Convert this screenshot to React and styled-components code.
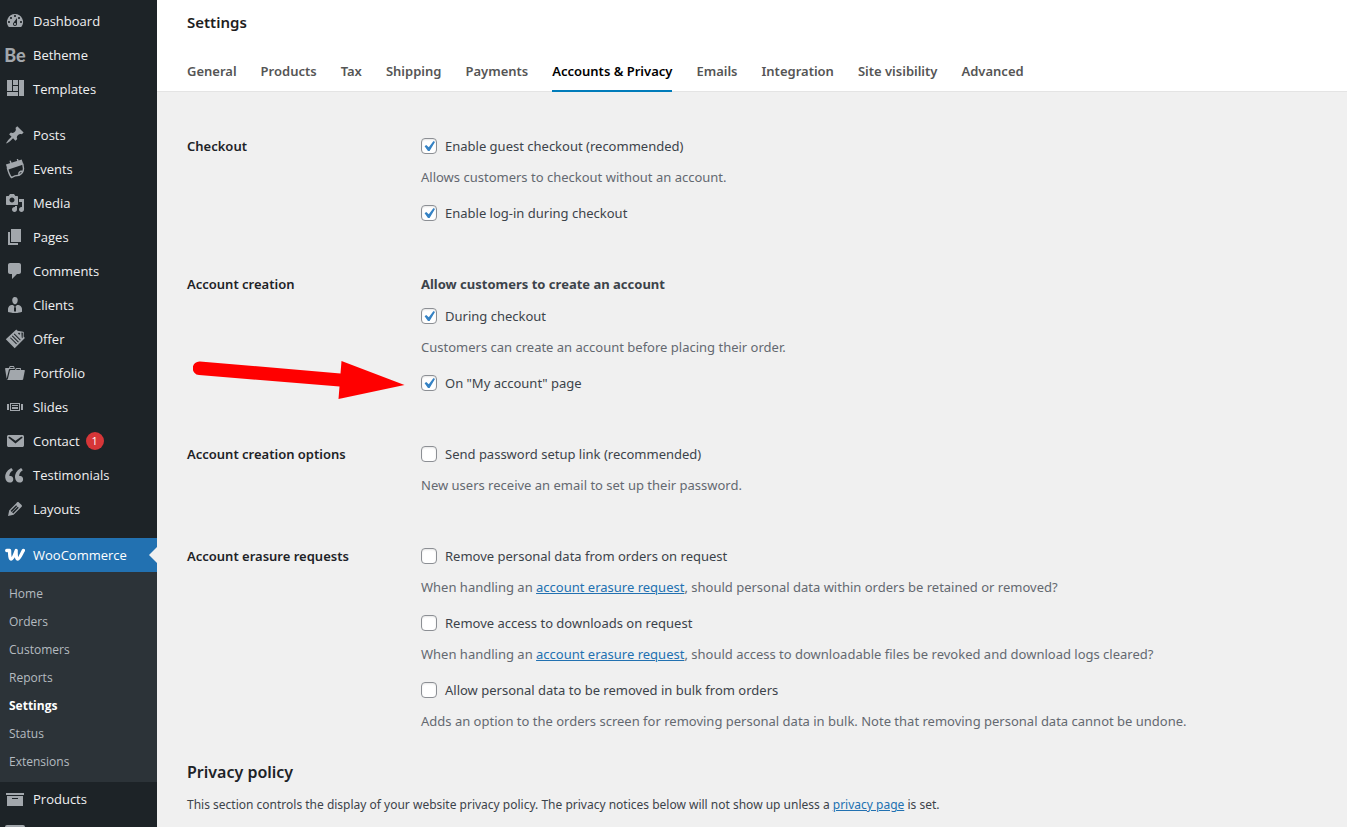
import React from 'react';
import styled, { createGlobalStyle, css } from 'styled-components';

const GlobalStyle = createGlobalStyle`
  *, *::before, *::after { box-sizing: border-box; }
  body {
    margin: 0;
    background: #f0f0f0;
    color: #3c434a;
    font-family: "Noto Sans", "Open Sans", sans-serif;
    font-size: 13px;
    line-height: 20px;
  }
`;

const Shell = styled.div`
  display: flex;
  height: 100vh;
  overflow: hidden;
`;

const Sidebar = styled.nav`
  flex: none;
  width: 157px;
  padding-top: 4px;
  overflow: hidden;
  background: #1d2327;
  font-family: "Open Sans", "Noto Sans", sans-serif;
`;

const MenuGroup = styled.ul`
  list-style: none;
  margin: 0 0 12px;
  padding: 0;
`;

const MenuLink = styled.a`
  position: relative;
  display: flex;
  align-items: center;
  gap: 8px;
  height: 34px;
  padding-left: 5px;
  color: ${(p) => (p.$active ? '#fff' : '#f0f0f1')};
  font-size: 13px;
  white-space: nowrap;
  text-decoration: none;
  ${(p) =>
    p.$active &&
    css`
      background: #2271b1;
      &::after {
        content: '';
        position: absolute;
        right: 0;
        top: 9px;
        border: 8px solid transparent;
        border-left: 0;
        border-right-color: #f0f0f0;
      }
    `}
`;

const Icon = styled.svg`
  flex: none;
  width: 20px;
  height: 20px;
  color: ${(p) => (p.$active ? '#fff' : '#a2a7ac')};
  fill: currentColor;
`;

const BrandMark = styled.span`
  display: flex;
  flex: none;
  justify-content: center;
  width: 20px;
  color: #a2a7ac;
  font-family: Lato, sans-serif;
  font-size: 18px;
  font-weight: 900;
  line-height: 18px;
`;

const Badge = styled.span`
  width: 18px;
  height: 18px;
  margin-left: -2px;
  border-radius: 9px;
  background: #d63638;
  color: #fff;
  font-size: 11px;
  line-height: 18px;
  text-align: center;
`;

const SubMenu = styled.ul`
  list-style: none;
  margin: 0;
  padding: 8px 0 6px;
  background: #2c3338;
`;

const SubLink = styled.a`
  display: block;
  padding: 4px 9px;
  color: ${(p) => (p.$current ? '#fff' : '#b5bbc0')};
  font-size: 12px;
  font-weight: ${(p) => (p.$current ? 700 : 400)};
  text-decoration: none;
`;

const Main = styled.main`
  flex: 1;
  min-width: 0;
`;

const Header = styled.header`
  padding: 10px 30px 0;
  background: #fff;
  border-bottom: 1px solid #e4e4e4;
`;

const PageTitle = styled.h1`
  margin: 0;
  color: #1e1e1e;
  font-size: 15px;
  font-weight: 600;
  line-height: 24px;
`;

const Tabs = styled.nav`
  display: flex;
  gap: 24px;
  margin-top: 16px;
`;

const Tab = styled.a`
  height: 42px;
  margin-bottom: -1px;
  padding-top: 11px;
  border-bottom: 2px solid ${(p) => (p.$current ? '#007cba' : 'transparent')};
  color: ${(p) => (p.$current ? '#000' : '#555')};
  font-weight: 600;
  white-space: nowrap;
  text-decoration: none;
`;

const Form = styled.form`
  position: relative;
  padding: 44px 30px 0;
`;

const Section = styled.section`
  display: grid;
  grid-template-columns: 234px 1fr;
  margin-bottom: ${(p) => (p.$last ? 29 : 51)}px;
`;

const SectionTitle = styled.h2`
  margin: 0;
  color: #1d2327;
  font-size: 13px;
  font-weight: 600;
  line-height: 20px;
`;

const Options = styled.div`
  display: flex;
  flex-direction: column;
  gap: 16px;
`;

const Lead = styled.strong`
  display: block;
  margin-bottom: -4px;
  font-weight: 700;
`;

const OptionLabel = styled.label`
  display: flex;
  align-items: center;
  gap: 8px;
`;

const Checkbox = styled.input`
  appearance: none;
  flex: none;
  width: 16px;
  height: 16px;
  margin: 0;
  border: 1px solid #8c8f94;
  border-radius: 4px;
  background: #fff;
  box-shadow: inset 0 1px 2px rgba(0, 0, 0, 0.1);
  &:checked::before {
    content: '';
    display: block;
    width: 14px;
    height: 14px;
    background: #3582c4;
    clip-path: path('M11.5 2L13 3L7.6 12H6L2.6 7.3L4.2 5.900L6.800 8.300Z');
  }
`;

const Description = styled.p`
  margin: 11px 0 0;
  color: #646970;
`;

const Link = styled.a`
  color: #2271b1;
`;

const PolicyTitle = styled.h2`
  margin: 0 0 11px;
  color: #1d2327;
  font-size: 16px;
  font-weight: 600;
  line-height: 24px;
`;

const PolicyText = styled.p`
  margin: 0;
  font-size: 12px;
`;

const Arrow = styled.svg`
  position: absolute;
  left: 36px;
  top: 268px;
  width: 212px;
  height: 40px;
  fill: #f00;
`;

const icons = {
  Dashboard: <path d="M3.76 16h12.48A7.998 7.998 0 0 0 10 3a7.998 7.998 0 0 0-6.24 13zM10 4c.55 0 1 .45 1 1s-.45 1-1 1-1-.45-1-1 .45-1 1-1zM6 6c.55 0 1 .45 1 1s-.45 1-1 1-1-.45-1-1 .45-1 1-1zm8 0c.55 0 1 .45 1 1s-.45 1-1 1-1-.45-1-1 .45-1 1-1zm-5.37 5.55L12 7v6c0 1.1-.9 2-2 2s-2-.9-2-2c0-.57.24-1.08.63-1.45zM4 10c.55 0 1 .45 1 1s-.45 1-1 1-1-.45-1-1 .45-1 1-1zm12 0c.55 0 1 .45 1 1s-.45 1-1 1-1-.45-1-1 .45-1 1-1zm-5 3c0-.55-.45-1-1-1s-1 .45-1 1 .45 1 1 1 1-.45 1-1z" />,
  Templates: <path d="M2 1h5v11H2V1zm6 0h5v5H8V1zm6 0h5v16h-5V1zM8 7h5v5H8V7zm-6 6h11v4H2v-4z" />,
  Posts: <path d="M10.44 3.02l1.82-1.82 6.36 6.35-1.83 1.82c-1.05-.68-2.48-.57-3.41.36l-.75.75c-.92.93-1.04 2.35-.35 3.41l-1.83 1.82-2.41-2.41-2.8 2.79c-.42.42-3.38 2.71-3.8 2.29s1.86-3.39 2.28-3.81l2.79-2.79L4.1 9.36l1.83-1.82c1.05.69 2.48.57 3.4-.36l.75-.75c.93-.92 1.05-2.35.36-3.41z" />,
  Events: (
    <>
      <path d="M.9 5.400L16.700.6L18.400 5.600L2.700 10.700Z" />
      <path
        d="M5.300 2.200L6.300 5M12.500.5L13.400 3M2.400 9C3.400 13 4.600 16.300 6.400 18.600C8.800 17 11 16.400 14 16.300C17.200 14.700 18.500 12.500 18.500 9.500L17.800 5M14 16.300C13.300 13.500 14.800 12 18 12"
        fill="none"
        stroke="currentColor"
        strokeWidth="1.400"
        strokeLinecap="round"
        strokeLinejoin="round"
      />
    </>
  ),
  Media: <path d="M13 11V4c0-.55-.45-1-1-1h-1.67L9 1H5L3.67 3H2c-.55 0-1 .45-1 1v7c0 .55.45 1 1 1h10c.55 0 1-.45 1-1zM7 4.5c1.38 0 2.5 1.12 2.5 2.5S8.38 9.5 7 9.5 4.5 8.38 4.5 7 5.62 4.5 7 4.5zM14 6h5v10.500c0 1.380-1.120 2.500-2.500 2.500S14 17.880 14 16.500s1.120-2.500 2.500-2.500c.17 0 .34.02.5.05V9h-3V6zm-4 8.050V13h2v3.500c0 1.380-1.120 2.500-2.500 2.500S7 17.880 7 16.500 8.120 14 9.500 14c.17 0 .34.02.5.05z" />,
  Pages: <path d="M6 15V2h10v13H6zm-1 1h8v2H3V5h2v11z" />,
  Comments: <path d="M5 2h9c1.1 0 2 .9 2 2v7c0 1.1-.9 2-2 2h-2l-5 5v-5H5c-1.1 0-2-.9-2-2V4c0-1.1.9-2 2-2z" />,
  Clients: <path d="M7.3 6l-.03-.19c-.04-.37-.05-.73-.03-1.08.02-.36.1-.71.25-1.04.14-.32.31-.61.52-.86s.49-.46.83-.6c.34-.15.72-.23 1.13-.23.69 0 1.26.2 1.71.59s.76.87.91 1.44.18 1.16.09 1.78l-.03.19c-.01.09-.05.25-.11.48-.05.24-.12.47-.2.69-.08.21-.19.45-.34.72-.14.27-.3.49-.47.69-.18.19-.4.34-.67.48-.27.13-.55.19-.86.19s-.59-.06-.87-.19c-.26-.13-.49-.29-.67-.5-.18-.2-.34-.42-.49-.66-.15-.25-.26-.49-.34-.73-.09-.25-.16-.47-.21-.67-.06-.21-.1-.37-.12-.5zm9.2 6.24c.41.7.5 1.41.5 2.14v2.49c0 .03-.12.08-.29.13-.18.04-.42.13-.97.27-.55.12-1.1.24-1.65.34s-1.19.19-1.95.27c-.75.08-1.46.12-2.13.12-.68 0-1.39-.04-2.14-.12-.75-.07-1.4-.17-1.98-.27-.58-.11-1.08-.23-1.56-.34-.49-.11-.8-.21-1.06-.29L3 16.870v-2.490c0-.75.07-1.460.46-2.150s.81-1.250 1.500-1.680C5.660 10.120 7.190 10 8 10l1.670 1.670L9 13v3l1.020 1.080L11 16v-3l-.68-1.330L11.970 10c.77 0 2.200.07 2.900.52.71.45 1.210 1.020 1.630 1.720z" />,
  Offer: (
    <path
      fillRule="evenodd"
      d="M11.300.6l1.200 1.100 5.600 1c.5.1.7.4.7.800l-.2 4.100 1.300 1.300-10.200 10.300L.8 10.300zM14 3.500l-1 1 1.300 1.300 1-1zM9.500 4.600l-.7.7 6.200 6.200.7-.7zM7.600 6.500l-.7.700 6.200 6.200.7-.7zM5.700 8.400l-.7.700 6.200 6.200.7-.7zM16.400 3.400l.3 5.100.9.8.3-5.600z"
    />
  ),
  Portfolio: <path d="M4 5H.78c-.37 0-.74.32-.69.84l1.560 9.990S3.500 8.470 3.860 6.700c.11-.53.61-.7.98-.7H10s-.7-2.080-.77-2.310C9.110 3.250 8.890 3 8.450 3H5.140c-.36 0-.7.23-.8.64C4.250 4.040 4 5 4 5zm4.880 0h-4s.42-1 .87-1h2.130c.48 0 1 1 1 1zM2.670 16.250c-.31.47-.76.75-1.260.75h15.730c.54 0 .92-.31 1.030-.83.44-2.190 1.680-8.440 1.680-8.440.07-.5-.3-.73-.62-.73H16V5.530c0-.16-.26-.53-.66-.53h-3.760c-.52 0-.87.58-.87.58L10 7H5.590c-.32 0-.63.19-.69.5 0 0-1.590 6.700-1.720 7.330-.07.37-.22.99-.51 1.420zM15.380 7H11s.58-1 1.130-1h2.290c.71 0 .96 1 .96 1z" />,
  Slides: <path fillRule="evenodd" d="M5 6h10v8H5zM2 7h2v6H2zM16 7h2v6h-2zM6 7v6h8V7zM7 8h6v1H7zM7 10h6v2H7z" />,
  Contact: <path d="M3.87 4h13.25C18.370 4 19 4.590 19 5.790v8.420c0 1.190-.63 1.790-1.880 1.790H3.870c-1.250 0-1.880-.6-1.880-1.790V5.790c0-1.200.63-1.790 1.880-1.790zm6.620 8.600l6.740-5.530c.24-.2.43-.66.13-1.070-.29-.41-.82-.42-1.170-.17l-5.700 3.860L4.800 5.830c-.35-.25-.88-.24-1.170.17-.3.41-.11.87.13 1.070z" />,
  Testimonials: <path transform="translate(-3.300 -1.900) scale(1.220)" d="M9.490 13.220c0-.74-.2-1.380-.61-1.900-.62-.78-1.830-.88-2.530-.72-.29-1.650 1.110-3.750 2.920-4.650L7.880 4c-2.730 1.300-5.420 4.280-4.960 8.050C3.210 14.430 4.590 16 6.540 16c.85 0 1.560-.25 2.120-.75s.83-1.180.83-2.030zm8.050 0c0-.74-.2-1.380-.61-1.900-.63-.78-1.830-.88-2.530-.72-.29-1.650 1.110-3.750 2.920-4.650L15.930 4c-2.730 1.300-5.410 4.280-4.950 8.050.29 2.380 1.660 3.950 3.610 3.950.85 0 1.560-.25 2.120-.75s.83-1.180.83-2.030z" />,
  Layouts: <path d="M13.890 3.390l2.710 2.720c.46.46.42 1.240.03 1.640l-8.010 8.020-5.560 1.160 1.160-5.580s7.600-7.630 7.990-8.030c.39-.39 1.220-.39 1.680.07zm-2.730 2.790l-5.590 5.610 1.110 1.110 5.540-5.650zm-2.970 8.230l5.580-5.600-1.070-1.080-5.590 5.600z" />,
  WooCommerce: (
    <path
      d="M1.700 5.500H4.600C4.600 10 4.800 14 6.300 14C7.700 14 9.500 10 11.200 5.500C11 10 11.300 14 12.900 14C14.500 14 16.300 9 18.400 5.400"
      fill="none"
      stroke="currentColor"
      strokeWidth="3.300"
      strokeLinecap="round"
      strokeLinejoin="round"
    />
  ),
  Products: <path d="M19 4v2H1V4h18zM2 7h16v10H2V7zm11 3V9H7v1h6z" />,
  Payments: <path fillRule="evenodd" d="M2 2h16a2 2 0 0 1 2 2v12a2 2 0 0 1-2 2H2a2 2 0 0 1-2-2V4a2 2 0 0 1 2-2zM2 7h16v2H2z" />,
};

function MenuItem({ name, active, badge, mark, iconOnly, children }) {
  return (
    <li>
      <MenuLink href="#" $active={active} aria-label={iconOnly ? name : undefined}>
        {mark ? (
          <BrandMark aria-hidden="true">{mark}</BrandMark>
        ) : (
          <Icon viewBox="0 0 20 20" $active={active} aria-hidden="true">{icons[name]}</Icon>
        )}
        {!iconOnly && name}
        {badge && <Badge>{badge}</Badge>}
      </MenuLink>
      {children}
    </li>
  );
}

function Option({ label, checked, children }) {
  return (
    <div>
      <OptionLabel>
        <Checkbox type="checkbox" defaultChecked={checked} />
        {label}
      </OptionLabel>
      {children && <Description>{children}</Description>}
    </div>
  );
}

const contentItems = ['Posts', 'Events', 'Media', 'Pages', 'Comments', 'Clients', 'Offer', 'Portfolio', 'Slides', 'Contact', 'Testimonials', 'Layouts'];
const subItems = ['Home', 'Orders', 'Customers', 'Reports', 'Settings', 'Status', 'Extensions'];
const tabs = ['General', 'Products', 'Tax', 'Shipping', 'Payments', 'Accounts & Privacy', 'Emails', 'Integration', 'Site visibility', 'Advanced'];

export default function App() {
  return (
    <Shell>
      <GlobalStyle />
      <Sidebar aria-label="Main menu">
        <MenuGroup>
          <MenuItem name="Dashboard" />
          <MenuItem name="Betheme" mark="Be" />
          <MenuItem name="Templates" />
        </MenuGroup>
        <MenuGroup>
          {contentItems.map((name) => (
            <MenuItem key={name} name={name} badge={name === 'Contact' ? '1' : null} />
          ))}
        </MenuGroup>
        <MenuGroup>
          <MenuItem name="WooCommerce" active>
            <SubMenu>
              {subItems.map((name) => (
                <li key={name}>
                  <SubLink href="#" $current={name === 'Settings'}>{name}</SubLink>
                </li>
              ))}
            </SubMenu>
          </MenuItem>
          <MenuItem name="Products" />
          <MenuItem name="Payments" iconOnly />
        </MenuGroup>
      </Sidebar>

      <Main>
        <Header>
          <PageTitle>Settings</PageTitle>
          <Tabs aria-label="Settings sections">
            {tabs.map((name) => (
              <Tab key={name} href="#" $current={name === 'Accounts & Privacy'}>{name}</Tab>
            ))}
          </Tabs>
        </Header>

        <Form>
          <Section>
            <SectionTitle>Checkout</SectionTitle>
            <Options>
              <Option label="Enable guest checkout (recommended)" checked>
                Allows customers to checkout without an account.
              </Option>
              <Option label="Enable log-in during checkout" checked />
            </Options>
          </Section>

          <Section>
            <SectionTitle>Account creation</SectionTitle>
            <Options>
              <Lead>Allow customers to create an account</Lead>
              <Option label="During checkout" checked>
                Customers can create an account before placing their order.
              </Option>
              <Option label={'On "My account" page'} checked />
            </Options>
          </Section>

          <Section>
            <SectionTitle>Account creation options</SectionTitle>
            <Options>
              <Option label="Send password setup link (recommended)">
                New users receive an email to set up their password.
              </Option>
            </Options>
          </Section>

          <Section $last>
            <SectionTitle>Account erasure requests</SectionTitle>
            <Options>
              <Option label="Remove personal data from orders on request">
                When handling an <Link href="#">account erasure request</Link>, should personal data within orders be retained or removed?
              </Option>
              <Option label="Remove access to downloads on request">
                When handling an <Link href="#">account erasure request</Link>, should access to downloadable files be revoked and download logs cleared?
              </Option>
              <Option label="Allow personal data to be removed in bulk from orders">
                Adds an option to the orders screen for removing personal data in bulk. Note that removing personal data cannot be undone.
              </Option>
            </Options>
          </Section>

          <PolicyTitle>Privacy policy</PolicyTitle>
          <PolicyText>
            This section controls the display of your website privacy policy. The privacy notices below will not show up unless a <Link href="#">privacy page</Link> is set.
          </PolicyText>

          <Arrow viewBox="0 0 212 40" aria-hidden="true">
            <path d="M7 1.500L147.500 13.500L148.500 1L211.500 25L145.500 39L146.500 26.500L6 15A6.700 6.700 0 0 1 7 1.500Z" />
          </Arrow>
        </Form>
      </Main>
    </Shell>
  );
}
